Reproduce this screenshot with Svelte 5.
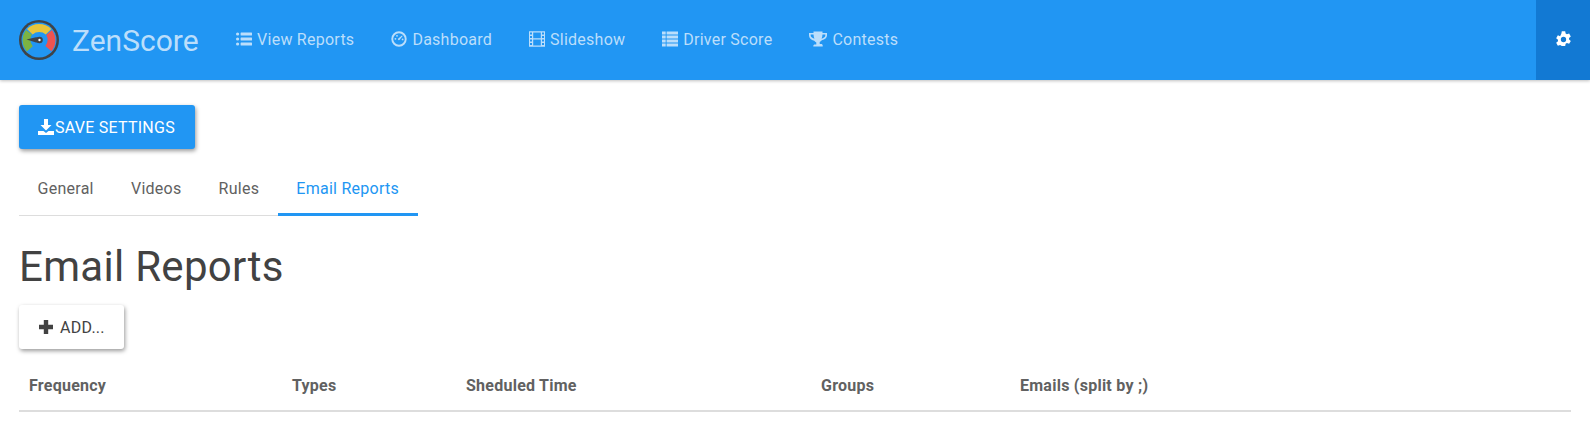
<script>
    const navItems = [
        { label: 'View Reports', icon: 'list' },
        { label: 'Dashboard', icon: 'gauge' },
        { label: 'Slideshow', icon: 'film' },
        { label: 'Driver Score', icon: 'table' },
        { label: 'Contests', icon: 'trophy' }
    ];
    const tabs = ['General', 'Videos', 'Rules', 'Email Reports'];
    const columns = [
        { label: 'Frequency', width: 263 },
        { label: 'Types', width: 174 },
        { label: 'Sheduled Time', width: 355 },
        { label: 'Groups', width: 199 },
        { label: 'Emails (split by ;)', width: 'auto' }
    ];
</script>

{#snippet icon(name)}
    <svg class="nav-icon" class:wide={name === 'trophy'} viewBox={name === 'trophy' ? '0 0 18 16' : '0 0 16 16'} aria-hidden="true">
        {#if name === 'list'}
            <circle cx="1.600" cy="3" r="1.600" /><circle cx="1.600" cy="8" r="1.600" /><circle cx="1.600" cy="13" r="1.600" />
            <rect x="4.600" y="1.500" width="11.400" height="3" rx=".5" /><rect x="4.600" y="6.500" width="11.400" height="3" rx=".5" /><rect x="4.600" y="11.500" width="11.400" height="3" rx=".5" />
        {:else if name === 'gauge'}
            <path fill-rule="evenodd" d="M8 .3a7.700 7.700 0 1 0 0 15.400A7.700 7.700 0 0 0 8 .3zm0 1.900a5.800 5.800 0 1 1 0 11.600A5.800 5.800 0 0 1 8 2.200z" />
            <path d="M7 7.700 11 4.400l.7.700-3.300 3.900a1 1 0 0 1-1.400-1.300z" /><circle cx="4.400" cy="7.800" r=".9" /><circle cx="6" cy="4.800" r=".9" /><circle cx="11.600" cy="8.400" r=".9" />
        {:else if name === 'film'}
            <path fill-rule="evenodd" d="M0 .3h16v15.400H0zM1 1.500v2h2v-2zm0 3.500v2h2V5zm0 3.500v2h2v-2zm0 3.500v2h2v-2zM13 1.500v2h2v-2zm0 3.500v2h2V5zm0 3.500v2h2v-2zm0 3.500v2h2v-2zM4.200 1.500v5.700h7.600V1.500zm0 7v6h7.600v-6z" />
        {:else if name === 'table'}
            <path d="M0 .5h3.700v3H0zM4.600.5H16v3H4.600zM0 4.500h3.700v3H0zM4.600 4.500H16v3H4.600zM0 8.500h3.700v3H0zM4.600 8.500H16v3H4.600zM0 12.500h3.700v3H0zM4.600 12.500H16v3H4.600z" />
        {:else}
            <path fill-rule="evenodd" d="M4.500 .5h9v1.500H18v2.600c0 2.200-2.100 4.200-5.200 4.700-.7.900-1.400 1.400-2.100 1.700v2h1.400c1 0 1.600.7 1.600 1.600v.9H4.300V15c0-.9.6-1.600 1.600-1.600h1.400v-2c-.7-.3-1.400-.8-2.100-1.700C2.100 9.200 0 7.200 0 4.600V2h4.500zM1.700 3.600v1c0 1.200 1.300 2.600 3.700 3.100-.5-1.100-.8-2.500-.9-4.100zm14.600 0h-2.800c-.1 1.600-.4 3-.9 4.100 2.400-.5 3.700-1.900 3.700-3.100z" />
        {/if}
    </svg>
{/snippet}

<header class="navbar">
    <div class="brand">
        <svg class="logo" viewBox="0 0 40 40" aria-hidden="true">
            <circle cx="20" cy="20" r="20" fill="#3f4347" />
            <circle cx="20" cy="20" r="17.500" fill="#2196f3" />
            <path d="M7.800 31.400A17 17 0 0 1 7 10l6 4.600a10 10 0 0 0 .8 11.600z" fill="#7cb342" />
            <path d="M8 9a17 17 0 0 1 24.300 0l-5.500 5.400a10 10 0 0 0-13.200 0z" fill="#e8c53a" />
            <path d="M33 10a17 17 0 0 1-.6 21.200l-6-5.200a10 10 0 0 0 .8-11z" fill="#ef5350" />
            <path d="M7.500 19.500 17 17.300l4 .4v4.600l-4 .2z" fill="#3f4347" />
            <circle cx="20.500" cy="20" r="3.300" fill="#3f4347" />
            <circle cx="20.500" cy="20" r="1.200" fill="#fff" />
        </svg>
        <span class="brand-name">ZenScore</span>
    </div>
    <nav class="nav-links">
        {#each navItems as item}
            <a class="nav-link" href="#{item.icon}">{@render icon(item.icon)}{item.label}</a>
        {/each}
    </nav>
    <button class="settings" aria-label="Settings">
        <svg viewBox="0 0 16 16" aria-hidden="true">
            <path fill-rule="evenodd" d="M6.400 0h3.200l.4 2.200 1.200.7 2.100-.8 1.600 2.800-1.700 1.400v1.400l1.700 1.400-1.600 2.800-2.100-.8-1.200.7-.4 2.200H6.400L6 13.600l-1.200-.7-2.100.8-1.600-2.800 1.700-1.400V8.100L1.100 6.700l1.600-2.800 2.100.8L6 2.200zM8 5.300a2.500 2.500 0 1 0 0 5 2.500 2.500 0 0 0 0-5z" transform="translate(0 .2)" />
        </svg>
    </button>
</header>

<main class="content">
    <button class="btn primary">
        <svg class="btn-icon" viewBox="0 0 16 16" aria-hidden="true">
            <path d="M6 0h4v6h3.500L8 11.500 2.500 6H6zM0 12h5.500L8 14l2.500-2H16v4H0z" />
        </svg>Save settings
    </button>

    <div class="tabs">
        {#each tabs as tab, i}
            <a class="tab" class:active={i === tabs.length - 1} href="#{tab}">{tab}</a>
        {/each}
    </div>

    <h1>Email Reports</h1>

    <button class="btn plain">
        <svg class="btn-icon" viewBox="0 0 16 16" aria-hidden="true">
            <path d="M5.800 1h4.400v4.800H15v4.400h-4.800V15H5.800v-4.800H1V5.800h4.800z" />
        </svg>Add...
    </button>

    <table>
        <thead>
            <tr>
                {#each columns as col}
                    <th style:width={col.width === 'auto' ? 'auto' : col.width + 'px'}>{col.label}</th>
                {/each}
            </tr>
        </thead>
    </table>
</main>

<style>
    :global(body) {
        margin: 0;
        background: #fff;
        font-family: Roboto, sans-serif;
        color: #424242;
    }

    .navbar {
        display: flex;
        align-items: stretch;
        height: 80px;
        background: #2196f3;
        box-shadow: 0 1px 3px rgba(0, 0, 0, 0.25);
    }

    .brand {
        display: flex;
        align-items: center;
        gap: 13px;
        padding-left: 19px;
        margin-right: 19px;
    }

    .logo {
        width: 40px;
        height: 40px;
    }

    .brand-name {
        font-size: 30px;
        color: #bbdefb;
    }

    .nav-links {
        display: flex;
        flex: 1;
    }

    .nav-link {
        display: flex;
        align-items: center;
        gap: 5px;
        padding: 0 18.500px 2px;
        font-size: 16px;
        letter-spacing: 0.25px;
        color: #bbdefb;
        text-decoration: none;
    }

    .nav-icon {
        width: 16px;
        height: 16px;
        fill: #bbdefb;
    }

    .nav-icon.wide {
        width: 18px;
    }

    .settings {
        width: 54px;
        border: 0;
        padding: 0 0 2px;
        background: #1279d3;
        display: flex;
        align-items: center;
        justify-content: center;
    }

    .settings svg {
        width: 17px;
        height: 17px;
        fill: #fff;
    }

    .content {
        padding: 25px 19px 0;
    }

    .btn {
        display: flex;
        align-items: center;
        height: 44px;
        padding: 0 19px;
        border: 0;
        border-radius: 3px;
        font-family: inherit;
        font-size: 16px;
        letter-spacing: 0.25px;
        text-transform: uppercase;
        box-shadow: 1px 2px 4px rgba(0, 0, 0, 0.4);
    }

    .btn-icon {
        width: 16px;
        height: 16px;
        fill: currentColor;
    }

    .primary {
        background: #2196f3;
        color: #fff;
        gap: 1px;
        padding-right: 20px;
    }

    .plain {
        background: #fff;
        color: #424242;
        gap: 6px;
    }

    .tabs {
        display: flex;
        width: fit-content;
        margin-top: 16px;
        border-bottom: 1px solid #ddd;
    }

    .tab {
        padding: 0 18.600px 2px;
        margin-bottom: -1px;
        line-height: 47px;
        font-size: 16px;
        letter-spacing: 0.25px;
        color: #616161;
        text-decoration: none;
        box-sizing: border-box;
        height: 51px;
    }

    .tab.active {
        color: #2196f3;
        border-bottom: 3px solid #2196f3;
    }

    h1 {
        margin: 24px 0 12px;
        font-size: 42px;
        letter-spacing: 0.3px;
        line-height: 53px;
        font-weight: 400;
        color: #424242;
    }

    table {
        width: 100%;
        margin-top: 12px;
        border-collapse: collapse;
        table-layout: fixed;
    }

    th {
        box-sizing: border-box;
        height: 50px;
        padding: 0 10px;
        text-align: left;
        font-size: 16px;
        font-weight: 700;
        letter-spacing: 0.25px;
        color: #616161;
        border-bottom: 2px solid #ddd;
    }
</style>
